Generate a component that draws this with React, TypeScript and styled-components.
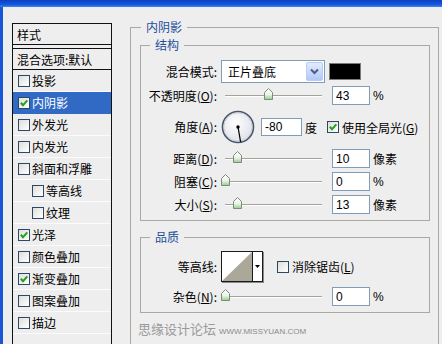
import React from 'react';
import styled, { createGlobalStyle } from 'styled-components';

const Global = createGlobalStyle`
  html, body { margin: 0; padding: 0; background: #eeeeee; overflow: hidden; }
  body {
    font-family: "Noto Sans CJK SC", "Noto Sans", sans-serif;
    font-size: 12px;
    color: #000;
  }
`;

const Window = styled.div`
  width: 442px;
  height: 344px;
  overflow: hidden;
  display: flex;
  flex-direction: column;
  background: #eeeeee;
`;

const TitleBar = styled.div`
  height: 7px;
  flex: none;
  background: linear-gradient(#0a3fc2, #1458dc 65%, #3a86f2);
`;

const Body = styled.div`
  flex: 1;
  min-height: 0;
  display: flex;
  align-items: flex-start;
  border-left: 3px solid #1a55d6;
`;

/* ---------- left list ---------- */
const StyleList = styled.div`
  flex: none;
  width: 100px;
  height: 340px;
  box-sizing: border-box;
  margin: 16px 0 0 9px;
  border: 1px solid #111;
  display: flex;
  flex-direction: column;
`;

const ListHead = styled.div`
  height: 20px;
  display: flex;
  align-items: center;
  padding-left: 4px;
  border-bottom: 1px solid #111;
  margin-bottom: 3px;
`;

const BlendItem = styled.div`
  height: 20px;
  display: flex;
  align-items: center;
  padding-left: 4px;
  border-top: 1px solid #111;
  border-bottom: 1px solid #111;
`;

const ListItem = styled.div<{ $selected?: boolean; $indent?: boolean }>`
  height: 21px;
  display: flex;
  align-items: center;
  gap: 2px;
  padding-left: ${p => (p.$indent ? 19 : 5)}px;
  border-bottom: 1px solid ${p => (p.$selected ? '#316ac5' : '#fbfbfb')};
  background: ${p => (p.$selected ? '#316ac5' : 'transparent')};
  color: ${p => (p.$selected ? '#fff' : '#000')};
`;

const Box = styled.span`
  flex: none;
  width: 12px;
  height: 12px;
  box-sizing: border-box;
  border: 1px solid #2c4866;
  background: linear-gradient(135deg, #dedfda, #ffffff);
  display: flex;
  align-items: center;
  justify-content: center;
`;

const Check: React.FC<{ on?: boolean }> = ({ on }) => (
  <Box>
    {on && (
      <svg width="10" height="10" viewBox="0 0 10 10">
        <path d="M1.8 4.8 L4 7.2 L8.3 2.4" fill="none" stroke="#21a121" strokeWidth="2" />
      </svg>
    )}
  </Box>
);

/* ---------- right side ---------- */
const Main = styled.div`
  flex: none;
  width: 309px;
  margin: 13px 0 0 18px;
`;

const Outer = styled.fieldset`
  margin: 0;
  min-width: 0;
  width: 309px;
  height: 380px;
  box-sizing: border-box;
  border: 1px solid #a9a8a2;
  padding: 4px 8px 0 9px;
`;

const Legend = styled.legend<{ $ml?: number }>`
  padding: 0 5px;
  margin-left: ${p => p.$ml ?? 0}px;
  line-height: 14px;
  font-size: 12px;
  color: #1d4f9c;
`;

const Group = styled.fieldset<{ $mt?: number; $pt: number; $pb: number }>`
  margin: ${p => p.$mt ?? 0}px 0 0 0;
  min-width: 0;
  width: 290px;
  box-sizing: border-box;
  border: 1px solid #a9a8a2;
  padding: ${p => p.$pt}px 0 ${p => p.$pb}px 9px;
`;

const Row = styled.div<{ $h: number; $mt?: number }>`
  display: flex;
  align-items: center;
  height: ${p => p.$h}px;
  margin-top: ${p => p.$mt ?? 0}px;
`;

const Label = styled.div`
  flex: none;
  width: 67px;
  margin-right: 4px;
  display: flex;
  justify-content: flex-end;
  white-space: nowrap;
  line-height: 14px;
`;

const Select = styled.div`
  flex: none;
  width: 104px;
  height: 23px;
  box-sizing: border-box;
  border: 1px solid #7f9db9;
  background: #fff;
  display: flex;
`;

const SelectText = styled.span`
  flex: 1;
  padding-left: 6px;
  display: flex;
  align-items: center;
`;

const SelectBtn = styled.span`
  flex: none;
  width: 15px;
  margin: 1px;
  border: 1px solid #b6cbf5;
  border-radius: 2px;
  background: linear-gradient(#e3ebfd, #b3c8f6);
  display: flex;
  align-items: center;
  justify-content: center;
`;

const Swatch = styled.span`
  flex: none;
  width: 32px;
  height: 17px;
  margin-left: 4px;
  box-sizing: border-box;
  border: 1px solid #7a7a7a;
  background: #000;
`;

const Slider = styled.div`
  position: relative;
  flex: none;
  width: 104px;
  height: 19px;
  box-sizing: border-box;
  padding: 0 3px 0 4px;
  display: flex;
  align-items: center;
`;

const Track = styled.div`
  flex: 1;
  height: 0;
  border-top: 1px solid #a4a29a;
  border-bottom: 1px solid #ffffff;
`;

const Thumb = styled.svg`
  position: absolute;
  top: 2px;
`;

const NumBox = styled.div<{ $w?: number; $h?: number; $ml?: number }>`
  flex: none;
  width: ${p => p.$w ?? 38}px;
  height: ${p => p.$h ?? 19}px;
  margin-left: ${p => p.$ml ?? 7}px;
  box-sizing: border-box;
  border: 1px solid #7f9db9;
  background: #fff;
  padding-left: 3px;
  display: flex;
  align-items: center;
  font-family: "Liberation Sans", Arial, sans-serif;
  font-size: 12px;
`;

const Unit = styled.span<{ $latin?: boolean }>`
  margin-left: 3px;
  font-family: ${p => (p.$latin ? '"Liberation Sans", Arial, sans-serif' : 'inherit')};
`;

const CheckLabel = styled.div<{ $ml: number }>`
  display: flex;
  align-items: center;
  gap: 3px;
  margin-left: ${p => p.$ml}px;
`;

const ContourBox = styled.div`
  flex: none;
  width: 42px;
  height: 31px;
  box-sizing: border-box;
  border: 1px solid #1a1a1a;
  box-shadow: 1px 1px 0 #8a8a8a;
  background: #fff;
  display: flex;
`;

const ContourArrow = styled.span`
  flex: 1;
  border-left: 1px solid #1a1a1a;
  display: flex;
  align-items: center;
  justify-content: center;
`;

const Footer = styled.div`
  margin: 8px 0 0 -2px;
  display: flex;
  align-items: baseline;
  line-height: 16px;
`;

const FooterCn = styled.span`
  font-size: 13px;
  color: #9a9a9a;
`;

const FooterUrl = styled.span`
  margin-left: 3px;
  font-family: "Liberation Sans", Arial, sans-serif;
  font-size: 8px;
  color: #8a8a8a;
`;

const ThumbIcon: React.FC<{ pos: number }> = ({ pos }) => (
  <Thumb width="9" height="12" viewBox="0 0 9 12" style={{ left: pos - 4.5 }}>
    <defs>
      <linearGradient id="thg" x1="0" y1="0" x2="0" y2="1">
        <stop offset="0" stopColor="#ffffff" />
        <stop offset="0.55" stopColor="#eef4ea" />
        <stop offset="1" stopColor="#8fd088" />
      </linearGradient>
    </defs>
    <path d="M4.5 0.5 L8.5 4.5 L8.5 11.5 L0.5 11.5 L0.5 4.5 Z" fill="url(#thg)" stroke="#7d8a7d" />
  </Thumb>
);

const SliderCtl: React.FC<{ frac: number }> = ({ frac }) => (
  <Slider>
    <Track />
    <ThumbIcon pos={4 + frac * 97} />
  </Slider>
);

const Dial: React.FC<{ angle: number }> = ({ angle }) => {
  const r = (angle * Math.PI) / 180;
  const x2 = 17 + 15 * Math.cos(r);
  const y2 = 17 - 15 * Math.sin(r);
  return (
    <svg width="34" height="34" viewBox="0 0 34 34">
      <defs>
        <radialGradient id="dialg" cx="42%" cy="38%" r="70%">
          <stop offset="0" stopColor="#ffffff" />
          <stop offset="1" stopColor="#dcdde4" />
        </radialGradient>
      </defs>
      <circle cx="17" cy="17" r="15.5" fill="url(#dialg)" stroke="#48546c" strokeWidth="1.6" />
      <circle cx="17" cy="17" r="14.2" fill="none" stroke="#c4c7d2" strokeWidth="0.8" />
      <line x1="17" y1="17" x2={x2} y2={y2} stroke="#000" strokeWidth="1.2" />
      <circle cx="17" cy="17" r="1.7" fill="#000" />
    </svg>
  );
};

const items: { name: string; on?: boolean; sel?: boolean; indent?: boolean }[] = [
  { name: '投影' },
  { name: '内阴影', on: true, sel: true },
  { name: '外发光' },
  { name: '内发光' },
  { name: '斜面和浮雕' },
  { name: '等高线', indent: true },
  { name: '纹理', indent: true },
  { name: '光泽', on: true },
  { name: '颜色叠加' },
  { name: '渐变叠加', on: true },
  { name: '图案叠加' },
  { name: '描边' },
];

export default function App() {
  return (
    <>
      <Global />
      <Window>
        <TitleBar />
        <Body>
          <StyleList>
            <ListHead>样式</ListHead>
            <BlendItem>混合选项:默认</BlendItem>
            {items.map(it => (
              <ListItem key={it.name} $selected={it.sel} $indent={it.indent}>
                <Check on={it.on} />
                <span>{it.name}</span>
              </ListItem>
            ))}
            <ListItem />
          </StyleList>

          <Main>
            <Outer>
              <Legend $ml={1}>内阴影</Legend>
              <Group $pt={8} $pb={6}>
                <Legend>结构</Legend>
                <Row $h={23}>
                  <Label>混合模式:</Label>
                  <Select>
                    <SelectText>正片叠底</SelectText>
                    <SelectBtn>
                      <svg width="9" height="7" viewBox="0 0 9 7">
                        <path d="M1 1.5 L4.5 5 L8 1.5" fill="none" stroke="#4a5d8a" strokeWidth="2" />
                      </svg>
                    </SelectBtn>
                  </Select>
                  <Swatch />
                </Row>
                <Row $h={19} $mt={3}>
                  <Label>
                    不透明度(<u>O</u>):
                  </Label>
                  <SliderCtl frac={0.45} />
                  <NumBox>43</NumBox>
                  <Unit $latin>%</Unit>
                </Row>
                <Row $h={34} $mt={5}>
                  <Label>
                    角度(<u>A</u>):
                  </Label>
                  <Dial angle={-80} />
                  <NumBox $w={41} $h={18} $ml={6}>-80</NumBox>
                  <Unit>度</Unit>
                  <CheckLabel $ml={10}>
                    <Check on />
                    <span>
                      使用全局光(<u>G</u>)
                    </span>
                  </CheckLabel>
                </Row>
                <Row $h={19} $mt={5}>
                  <Label>
                    距离(<u>D</u>):
                  </Label>
                  <SliderCtl frac={0.124} />
                  <NumBox>10</NumBox>
                  <Unit>像素</Unit>
                </Row>
                <Row $h={19} $mt={4}>
                  <Label>
                    阻塞(<u>C</u>):
                  </Label>
                  <SliderCtl frac={0} />
                  <NumBox>0</NumBox>
                  <Unit $latin>%</Unit>
                </Row>
                <Row $h={19} $mt={4}>
                  <Label>
                    大小(<u>S</u>):
                  </Label>
                  <SliderCtl frac={0.124} />
                  <NumBox>13</NumBox>
                  <Unit>像素</Unit>
                </Row>
              </Group>

              <Group $mt={9} $pt={7} $pb={6}>
                <Legend>品质</Legend>
                <Row $h={31}>
                  <Label>等高线:</Label>
                  <ContourBox>
                    <svg width="30" height="29" viewBox="0 0 30 29">
                      <rect width="30" height="29" fill="#ffffff" />
                      <polygon points="0,29 30,0 30,29" fill="#aca899" />
                    </svg>
                    <ContourArrow>
                      <svg width="5" height="3" viewBox="0 0 5 3">
                        <polygon points="0,0 5,0 2.5,3" fill="#000" />
                      </svg>
                    </ContourArrow>
                  </ContourBox>
                  <CheckLabel $ml={14}>
                    <Check />
                    <span>
                      消除锯齿(<u>L</u>)
                    </span>
                  </CheckLabel>
                </Row>
                <Row $h={19} $mt={5}>
                  <Label>
                    杂色(<u>N</u>):
                  </Label>
                  <SliderCtl frac={0} />
                  <NumBox>0</NumBox>
                  <Unit $latin>%</Unit>
                </Row>
              </Group>

              <Footer>
                <FooterCn>思缘设计论坛</FooterCn>
                <FooterUrl>WWW.MISSYUAN.COM</FooterUrl>
              </Footer>
            </Outer>
          </Main>
        </Body>
      </Window>
    </>
  );
}
